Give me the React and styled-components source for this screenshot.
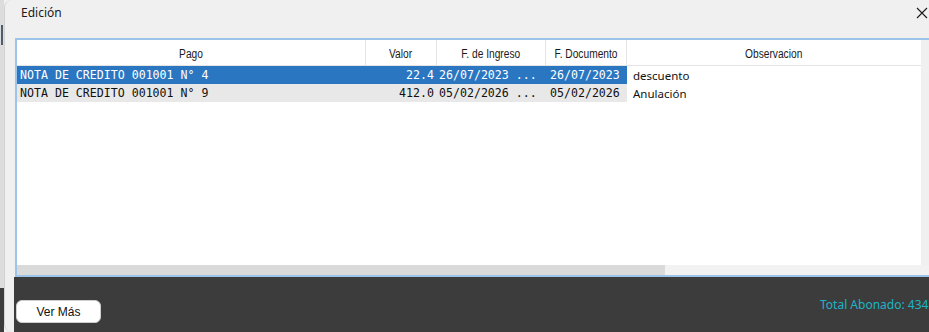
import React from "react";
import styled, { createGlobalStyle } from "styled-components";

const GlobalStyle = createGlobalStyle`
  html, body {
    margin: 0;
    padding: 0;
    background: #f0f0f0;
  }
  * {
    box-sizing: border-box;
  }
`;

const columns = [
  { key: "pago", title: "Pago", width: 349, align: "left", pad: 3 },
  { key: "valor", title: "Valor", width: 71, align: "right", pad: 3 },
  { key: "ingreso", title: "F. de Ingreso", width: 109, align: "left", pad: 2 },
  { key: "documento", title: "F. Documento", width: 81, align: "left", pad: 4 },
  { key: "obs", title: "Observacion", width: 294, align: "left", pad: 6 },
];

const rows = [
  {
    pago: "NOTA DE CREDITO 001001 N° 4",
    valor: "22.4",
    ingreso: "26/07/2023 ...",
    documento: "26/07/2023",
    obs: "descuento",
    selected: true,
  },
  {
    pago: "NOTA DE CREDITO 001001 N° 9",
    valor: "412.0",
    ingreso: "05/02/2026 ...",
    documento: "05/02/2026",
    obs: "Anulación",
    selected: false,
  },
];

const App = () => {
  return (
    <>
      <GlobalStyle />
      <Screen>
        <BackWindow>
          <BackTop>
            <BackThumb />
          </BackTop>
          <BackBottom />
        </BackWindow>
        <Dialog>
          <TitleBar>
            <Title>Edición</Title>
            <CloseButton aria-label="Cerrar">
              <svg width="12" height="12" viewBox="0 0 12 12">
                <path d="M1 1 L11 11 M11 1 L1 11" stroke="#1a1a1a" strokeWidth="1.1" fill="none" />
              </svg>
            </CloseButton>
          </TitleBar>

          <Content>
            <TableFrame>
              <TableArea>
                <Grid>
                  {columns.map((c, i) => (
                    <HeaderCell key={c.key} $last={i === columns.length - 1}>
                      <HeaderText>{c.title}</HeaderText>
                    </HeaderCell>
                  ))}
                  {rows.map((r, ri) =>
                    columns.map((c) =>
                      c.key === "obs" ? (
                        <ObsCell key={ri + c.key}>{r[c.key]}</ObsCell>
                      ) : (
                        <Cell
                          key={ri + c.key}
                          $align={c.align}
                          $pad={c.pad}
                          $selected={r.selected}
                        >
                          {r[c.key]}
                        </Cell>
                      )
                    )
                  )}
                </Grid>
                <VScroll />
              </TableArea>
              <HScroll>
                <HThumb />
              </HScroll>
            </TableFrame>

            <Footer>
              <FooterLeft>
                <VerMas>Ver Más</VerMas>
              </FooterLeft>
              <Total>Total Abonado: 434.4</Total>
            </Footer>
          </Content>
        </Dialog>
      </Screen>
    </>
  );
};

const Screen = styled.div`
  display: flex;
  width: 929px;
  height: 332px;
  overflow: hidden;
  background: #f0f0f0;
`;

const BackWindow = styled.div`
  width: 4px;
  flex-shrink: 0;
  display: flex;
  flex-direction: column;
`;

const BackTop = styled.div`
  flex: 1;
  background: #dcdcdc;
  padding-top: 25px;
  padding-left: 1px;
`;

const BackThumb = styled.div`
  width: 2px;
  height: 20px;
  background: #4d5d6d;
`;

const BackBottom = styled.div`
  height: 44px;
  background: #3c3c3c;
`;

const Dialog = styled.div`
  flex: 1;
  min-width: 0;
  display: flex;
  flex-direction: column;
  background: #f0f0f0;
  border-left: 1px solid #d2d2d2;
  border-top-left-radius: 8px;
  border-bottom-left-radius: 8px;
`;

const TitleBar = styled.div`
  height: 25px;
  display: flex;
  align-items: center;
  justify-content: space-between;
  padding-left: 16px;
  padding-right: 1px;
`;

const Title = styled.span`
  font-family: "Noto Sans", "Open Sans", sans-serif;
  font-size: 12px;
  color: #1a1a1a;
`;

const CloseButton = styled.div`
  display: flex;
  align-items: center;
  width: 12px;
  height: 12px;
  margin-top: 1px;
`;

const Content = styled.div`
  flex: 1;
  display: flex;
  flex-direction: column;
  padding-left: 9px;
  padding-top: 13px;
`;

const TableFrame = styled.div`
  margin-left: 1px;
  height: 239px;
  display: flex;
  flex-direction: column;
  border: 2px solid #9cc3ea;
  border-right: none;
  background: #ffffff;
`;

const TableArea = styled.div`
  flex: 1;
  display: flex;
  min-height: 0;
`;

const Grid = styled.div`
  display: grid;
  grid-template-columns: ${columns.map((c) => c.width + "px").join(" ")};
  grid-template-rows: 26px;
  grid-auto-rows: 18px;
  align-content: start;
  background: #ffffff;
`;

const VScroll = styled.div`
  flex: 1;
  background: #f0f0f0;
`;

const HeaderCell = styled.div`
  display: flex;
  align-items: center;
  justify-content: center;
  border-bottom: 1px solid #e4e4e4;
  border-right: ${(p) => (p.$last ? "none" : "1px solid #e4e4e4")};
  padding-top: 2px;
`;

const HeaderText = styled.span`
  display: inline-block;
  font-family: "Liberation Sans Narrow", "Liberation Sans", Arial, sans-serif;
  font-size: 12px;
  color: #1a1a1a;
  white-space: nowrap;
  transform: scaleX(0.85);
`;

const Cell = styled.div`
  display: flex;
  align-items: center;
  justify-content: ${(p) => (p.$align === "right" ? "flex-end" : "flex-start")};
  padding: 0 ${(p) => (p.$align === "right" ? p.$pad : 0)}px 0
    ${(p) => (p.$align === "right" ? 0 : p.$pad)}px;
  background: ${(p) => (p.$selected ? "#2b76c1" : "#e8e8e8")};
  color: ${(p) => (p.$selected ? "#ffffff" : "#111111")};
  font-family: "DejaVu Sans Mono", "Liberation Mono", monospace;
  font-size: 11.6px;
  white-space: pre;
  overflow: hidden;
`;

const ObsCell = styled.div`
  display: flex;
  align-items: center;
  padding-left: 6px;
  background: #ffffff;
  color: #111111;
  font-family: "Noto Sans", "Open Sans", sans-serif;
  font-size: 11.5px;
  white-space: nowrap;
`;

const HScroll = styled.div`
  height: 10px;
  display: flex;
  background: #f2f2f2;
`;

const HThumb = styled.div`
  width: 648px;
  background: #dadada;
`;

const Footer = styled.div`
  flex: 1;
  display: grid;
  grid-template-columns: 804px 1fr;
  align-items: start;
  background: #3c3c3c;
  padding-left: 2px;
`;

const FooterLeft = styled.div`
  padding-top: 23px;
`;

const VerMas = styled.button`
  width: 85px;
  height: 23px;
  border: 1px solid #cfcfcf;
  border-radius: 6px;
  background: #ffffff;
  font-family: "Liberation Sans", Arial, sans-serif;
  font-size: 12px;
  color: #111111;
  padding: 0;
  cursor: pointer;
`;

const Total = styled.div`
  padding-top: 19px;
  font-family: "Noto Sans", "Open Sans", sans-serif;
  font-size: 12px;
  color: #1cb4c4;
  white-space: nowrap;
`;

export default App;
